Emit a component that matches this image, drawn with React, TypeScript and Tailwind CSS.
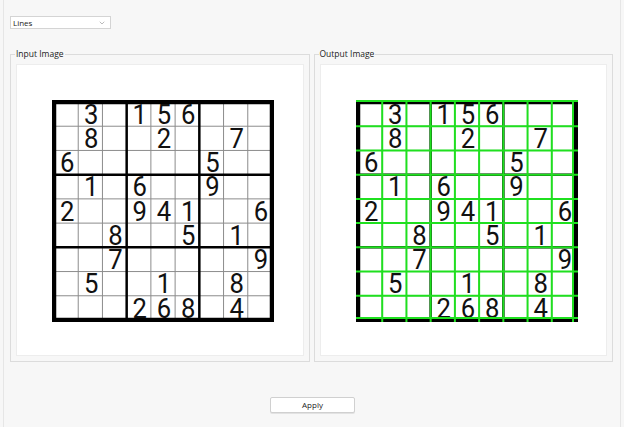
import { ChevronDown } from "lucide-react"

const PUZZLE = [
  "_3_156___",
  "_8__2__7_",
  "6_____5__",
  "_1_6__9__",
  "2__941__6",
  "__8__5_1_",
  "__7_____9",
  "_5__1__8_",
  "___268_4_",
]

const SIZE = 222
const INSET = 2
const CELL = (SIZE - INSET * 2) / 9

function Sudoku({ lines }: { lines?: boolean }) {
  const pos = (i: number) => INSET + i * CELL
  return (
    <svg width={SIZE} height={SIZE} viewBox={`0 0 ${SIZE} ${SIZE}`} className="block">
      <rect x={0} y={0} width={SIZE} height={SIZE} fill="#fff" />
      {/* thin lines */}
      {[1, 2, 4, 5, 7, 8].map(i => (
        <g key={`t${i}`}>
          <line x1={pos(i)} y1={INSET} x2={pos(i)} y2={SIZE - INSET} stroke="#8c8c8c" strokeWidth={1} />
          <line x1={INSET} y1={pos(i)} x2={SIZE - INSET} y2={pos(i)} stroke="#8c8c8c" strokeWidth={1} />
        </g>
      ))}
      {/* box lines */}
      {[3, 6].map(i => (
        <g key={`b${i}`}>
          <line x1={pos(i)} y1={INSET} x2={pos(i)} y2={SIZE - INSET} stroke="#000" strokeWidth={2.5} />
          <line x1={INSET} y1={pos(i)} x2={SIZE - INSET} y2={pos(i)} stroke="#000" strokeWidth={2.5} />
        </g>
      ))}
      <rect x={INSET} y={INSET} width={SIZE - INSET * 2} height={SIZE - INSET * 2} fill="none" stroke="#000" strokeWidth={4.5} />

      {PUZZLE.map((row, r) =>
        row.split("").map((ch, c) =>
          ch === "_" ? null : (
            <text
              key={`${r}-${c}`}
              transform={`translate(${pos(c) + CELL / 2 + 1} ${pos(r) + CELL - 2.5}) scale(0.9 1)`}
              textAnchor="middle"
              fontFamily="Roboto, 'Open Sans', sans-serif"
              fontSize={28.5}
              fill="#111"
            >
              {ch}
            </text>
          )
        )
      )}

      {lines && (
        <g stroke="#1fe01f" strokeWidth={2}>
          {[0, 1, 2, 3, 4, 5, 6, 7, 8, 9].map(i => (
            <line key={`h${i}`} x1={0} y1={i === 0 ? 1 : i === 9 ? SIZE - 4 : pos(i)} x2={SIZE} y2={i === 0 ? 1 : i === 9 ? SIZE - 4 : pos(i)} />
          ))}
          {[1, 2, 3, 4, 5, 6, 7, 8, 9].map(i => (
            <line key={`v${i}`} x1={i === 9 ? SIZE - 5 : pos(i)} y1={0} x2={i === 9 ? SIZE - 5 : pos(i)} y2={SIZE} />
          ))}
        </g>
      )}
    </svg>
  )
}

function GroupBox({ title, children }: { title: string; children: React.ReactNode }) {
  return (
    <div className="relative flex flex-1 flex-col border border-[#dcdcdc] px-[5px] pb-[5px] pt-[9px]">
      <span className="absolute left-[4px] top-[-7px] bg-[#f7f7f7] px-[1px] text-[8.5px] leading-[12px] text-[#222]">
        {title}
      </span>
      <div className="flex-1 border border-[#ededed] bg-white pl-[35px] pt-[35px]">
        {children}
      </div>
    </div>
  )
}

export default function App() {
  return (
    <div
      className="h-[427px] w-[624px] overflow-hidden bg-[#f7f7f7] px-[3px]"
      style={{ fontFamily: "'Open Sans', 'Liberation Sans', sans-serif" }}
    >
      <div className="flex h-full flex-col border-x border-[#e6e6e6] px-[6px]">
        {/* mode selector */}
        <div className="mt-[16px] flex h-[13px] w-[101px] items-center justify-between border border-[#d4d4d4] bg-white pl-[2px] pr-[4px]">
          <span className="text-[8px] leading-none text-[#222]">Lines</span>
          <ChevronDown size={8} strokeWidth={1.5} className="text-[#777]" />
        </div>

        {/* images */}
        <div className="mt-[25px] flex h-[308px] gap-[4px] pr-[1px]">
          <GroupBox title="Input Image">
            <Sudoku />
          </GroupBox>
          <GroupBox title="Output Image">
            <Sudoku lines />
          </GroupBox>
        </div>

        {/* actions */}
        <div className="mt-[35px] flex justify-center pl-[1px]">
          <button className="h-[16px] w-[85px] rounded-[2px] border border-[#d0d0d0] bg-white text-[8px] leading-none text-[#222] shadow-[0_1px_0_#e2e2e2]">
            Apply
          </button>
        </div>
      </div>
    </div>
  )
}
